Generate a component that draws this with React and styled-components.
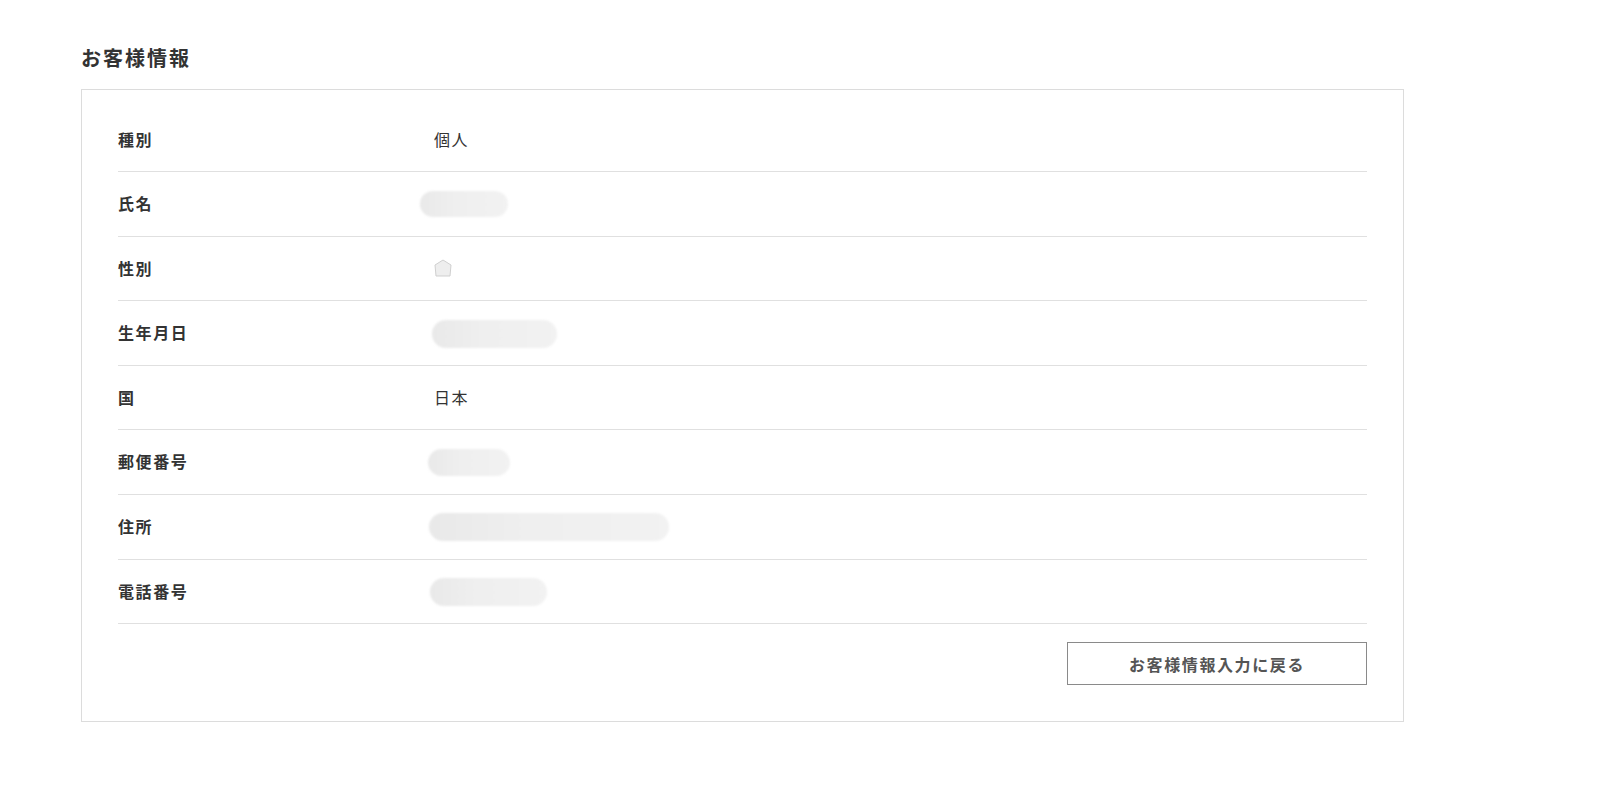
import React from "react";
import styled, { createGlobalStyle } from "styled-components";

const GlobalStyle = createGlobalStyle`
  body {
    margin: 0;
    background: #fff;
    font-family: "Noto Sans CJK JP", "Noto Sans", sans-serif;
    color: #333;
  }
`;

const Page = styled.div`
  padding: 43px 0 60px 81px;
`;

const Title = styled.h2`
  margin: 0 0 16px;
  font-size: 20px;
  line-height: 30px;
  font-weight: 700;
  letter-spacing: 0.1em;
  color: #333;
`;

const Card = styled.div`
  width: 1323px;
  box-sizing: border-box;
  border: 1px solid #dcdcdc;
  padding: 17.5px 36px 36px;
  display: flex;
  flex-direction: column;
`;

const Row = styled.div`
  display: flex;
  align-items: center;
  padding: 19px 0;
  line-height: 25.6px;
  min-height: 25.6px;
  border-bottom: 1px solid #e0e0e0;
  font-size: 16px;
  letter-spacing: 0.1em;
`;

const Label = styled.div`
  width: 316px;
  flex-shrink: 0;
  font-weight: 700;
  color: #333;
`;

const Value = styled.div`
  color: #333;
  display: flex;
  align-items: center;
  height: 25.6px;
`;

const Blur = styled.div`
  width: ${(p) => p.$w}px;
  height: ${(p) => p.$h}px;
  margin-left: ${(p) => p.$x}px;
  margin-top: ${(p) => p.$y || 0}px;
  border-radius: ${(p) => p.$h / 2}px;
  background: linear-gradient(90deg, #e9e9e9, #efefef 40%, #f2f2f2);
  filter: blur(1.3px);
`;

const Footer = styled.div`
  display: flex;
  justify-content: flex-end;
  margin-top: 18px;
`;

const BackButton = styled.button`
  width: 300px;
  height: 43px;
  box-sizing: border-box;
  border: 1px solid #8a8a8a;
  background: #fff;
  color: #555;
  font-family: inherit;
  font-size: 16px;
  font-weight: 700;
  letter-spacing: 0.1em;
  cursor: pointer;
`;

const GenderMark = () => (
  <svg width="20" height="20" viewBox="0 0 20 20" style={{ marginLeft: -1, filter: "blur(0.4px)" }}>
    <polygon points="10,2 18,7 17,18 3,18 2,7" fill="#eeeeee" stroke="#cfcfcf" strokeWidth="1" />
  </svg>
);

const rows = [
  { label: "種別", value: "個人" },
  { label: "氏名", blur: { w: 88, h: 26, x: -14 } },
  { label: "性別", gender: true },
  { label: "生年月日", blur: { w: 125, h: 28, x: -2 } },
  { label: "国", value: "日本" },
  { label: "郵便番号", blur: { w: 82, h: 27, x: -6 } },
  { label: "住所", blur: { w: 240, h: 28, x: -5 } },
  { label: "電話番号", blur: { w: 117, h: 28, x: -4 } },
];

export default function App() {
  return (
    <>
      <GlobalStyle />
      <Page>
        <Title>お客様情報</Title>
        <Card>
          {rows.map((r) => (
            <Row key={r.label}>
              <Label>{r.label}</Label>
              <Value>
                {r.value}
                {r.blur && <Blur $w={r.blur.w} $h={r.blur.h} $x={r.blur.x} $y={1} />}
                {r.gender && <GenderMark />}
              </Value>
            </Row>
          ))}
          <Footer>
            <BackButton>お客様情報入力に戻る</BackButton>
          </Footer>
        </Card>
      </Page>
    </>
  );
}
